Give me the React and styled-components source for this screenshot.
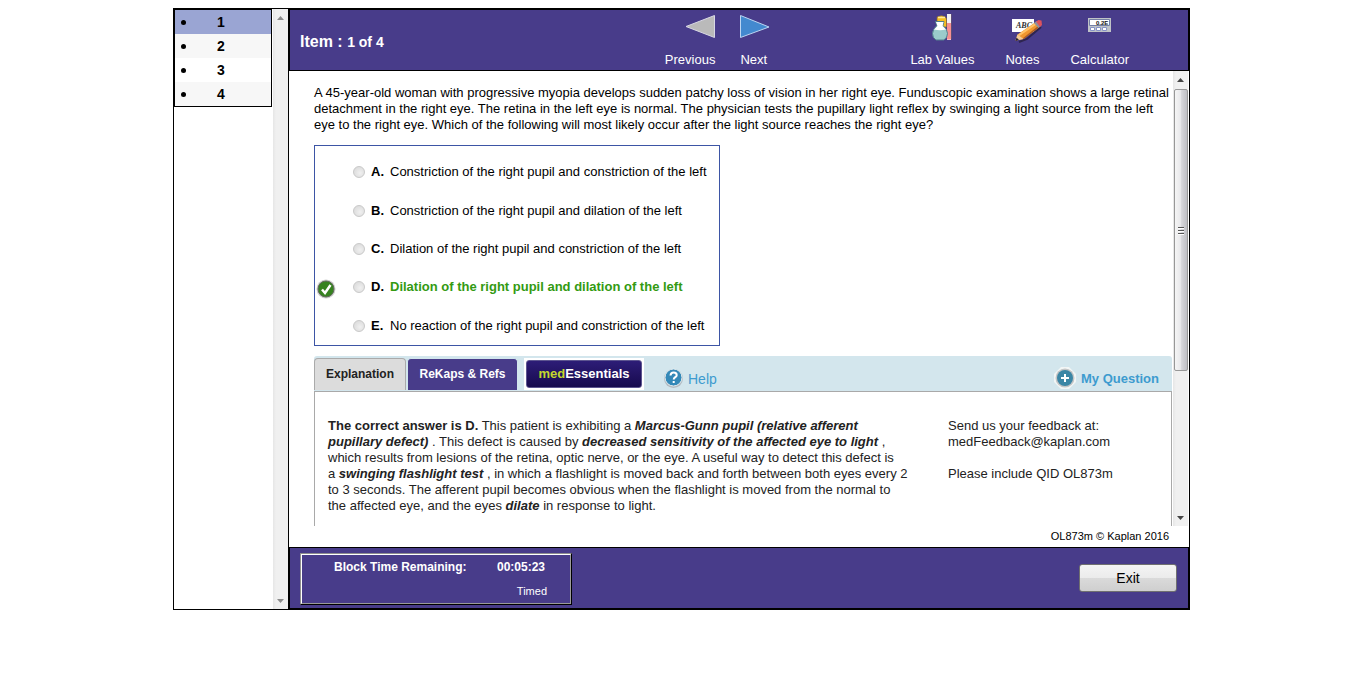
import React from "react";
import styled, { createGlobalStyle } from "styled-components";

const PURPLE = "#483c8a";

const GlobalStyle = createGlobalStyle`
  * { box-sizing: border-box; }
  body {
    margin: 0;
    background: #fff;
    color: #000;
    font: 13px/16px "Liberation Sans", Arial, sans-serif;
  }
  button, input { font: inherit; margin: 0; }
  p, ul, h1 { margin: 0; padding: 0; }
`;

const Page = styled.div`
  padding: 8px 3px 8px 0;
`;

const Shell = styled.div`
  display: grid;
  grid-template-columns: 114px minmax(0, 1fr);
  max-width: 1017px;
  min-height: 602px;
  margin: 0 auto;
  border: 1px solid #000;
`;

const Sidebar = styled.nav`
  display: flex;
  justify-content: space-between;
`;

const ItemList = styled.ul`
  align-self: flex-start;
  width: 98px;
  border: 1px solid #000;
  list-style: none;
`;

const ItemRow = styled.li`
  background: ${(p) => (p.$active ? "#9aa5d3" : p.$shade ? "#f7f7f7" : "#fff")};
`;

const ItemLink = styled.a`
  display: flex;
  align-items: center;
  height: 24px;
  padding-left: 6px;
  color: #000;
  font-size: 14px;
  font-weight: bold;
  text-decoration: none;

  &::before {
    content: "";
    width: 5px;
    height: 5px;
    margin-right: 31px;
    border-radius: 50%;
    background: #000;
  }
`;

const Track = styled.div`
  display: flex;
  flex-direction: column;
  align-items: center;
  flex: none;
  width: 15px;
  padding: ${(p) => (p.$idle ? "7px 0 6px" : "7px 0 6px")};
  justify-content: space-between;
  background: linear-gradient(90deg, #e6e6e6, #f0f0f0 3px);
`;

const Thumb = styled.div`
  display: flex;
  align-items: center;
  justify-content: center;
  width: 14px;
  height: 282px;
  margin: 7px 0 auto;
  border: 1px solid #979797;
  border-radius: 2px;
  background: linear-gradient(90deg, #f5f5f5, #e9e9eb 45%, #d6d6da 55%, #bfbfc4);
`;

const Main = styled.main`
  display: flex;
  flex-direction: column;
  border-left: 1px solid #000;
`;

const Header = styled.header`
  display: flex;
  align-items: flex-start;
  height: 62px;
  padding: 0 59px 0 10px;
  border: 1px solid #000;
  background: ${PURPLE};
  color: #fff;
`;

const Title = styled.h1`
  margin: 22px auto 0 0;
  font-size: 16px;
  line-height: 20px;
`;

const TitleCount = styled.span`
  font-size: 14px;
`;

const ButtonGroup = styled.div`
  display: flex;
  gap: ${(p) => p.$gap}px;
  margin-right: ${(p) => p.$after || 0}px;
`;

const ToolButton = styled.button`
  display: flex;
  flex-direction: column;
  align-items: ${(p) => p.$align || "center"};
  padding: 3px 0 0;
  border: 0;
  background: none;
  color: #fff;
  line-height: 16px;
  cursor: pointer;

  svg { display: block; height: 30px; margin-bottom: 9px; }
`;

const Content = styled.section`
  display: flex;
  flex-direction: column;
  flex: 1;
`;

const Scroller = styled.div`
  display: flex;
  flex: 1;
  padding: 0 1px 0 25px;
`;

const Body = styled.div`
  display: flex;
  flex-direction: column;
  flex: 1;
  min-width: 0;
  margin-right: 1px;
  padding-top: 14px;
`;

const Question = styled.p`
  margin-bottom: 12px;
`;

const Choices = styled.div`
  display: grid;
  grid-auto-rows: 1fr;
  width: 406px;
  height: 201px;
  padding-top: 7px;
  border: 1px solid #3d55a5;
`;

const Choice = styled.label`
  display: grid;
  grid-template-columns: 38px 18px 19px 1fr;
  align-items: center;
  white-space: nowrap;
`;

const Mark = styled.span`
  display: flex;
  padding: 3px 0 0 1px;
`;

const Radio = styled.input`
  appearance: none;
  width: 12px;
  height: 12px;
  border: 1px solid #c9c9c9;
  border-radius: 50%;
  background: radial-gradient(circle at 60% 60%, #f0f0f0, #d6d6d6);
`;

const ChoiceText = styled.span`
  color: ${(p) => (p.$correct ? "#339a12" : "#000")};
  font-weight: ${(p) => (p.$correct ? "bold" : "normal")};
`;

const TabBar = styled.div`
  display: flex;
  align-items: flex-start;
  height: 35px;
  margin-top: 10px;
  padding-top: 2px;
  border-radius: 3px 3px 0 0;
  background: #d3e6ed;
`;

const Tab = styled.button`
  width: ${(p) => p.$width}px;
  height: 32px;
  margin-right: 1px;
  padding: 0 0 2px;
  border: 1px solid ${(p) => (p.$active ? "#aaa" : "#d3e6ed")};
  border-bottom: 0;
  border-radius: 4px 4px 0 0;
  background: ${(p) => (p.$active ? "#dcdcdc" : PURPLE)};
  color: ${(p) => (p.$active ? "#222" : "#fff")};
  font-size: 12px;
  font-weight: bold;
`;

const BrandTab = styled.button`
  width: 120px;
  height: 32px;
  margin: 0 20px 0 5px;
  padding: 0;
  border: 2px solid #fff;
  background: #fff;
  color: #fff;
  font-weight: bold;
`;

const BrandFace = styled.span`
  display: block;
  height: 28px;
  border: 1px solid #5d5590;
  border-radius: 3px;
  background: linear-gradient(#2d1d77, #170a4e);
  line-height: 26px;
`;

const BrandAccent = styled.span`
  color: #c3d82e;
`;

const BarLink = styled.a`
  display: flex;
  align-items: center;
  gap: 5px;
  margin-top: 10px;
  margin-left: ${(p) => (p.$end ? "auto" : "0")};
  margin-right: ${(p) => (p.$end ? "13px" : "0")};
  color: #3d9bcf;
  font-size: ${(p) => (p.$end ? 13 : 14)}px;
  font-weight: ${(p) => (p.$end ? "bold" : "normal")};
  text-decoration: none;

  svg { display: block; margin: -3px 0; }
  span { padding-top: 3px; }
`;

const Panel = styled.div`
  display: flex;
  flex: 1;
  padding: 26px 0 0 13px;
  border: 1px solid #a9a9a9;
  border-bottom: 0;
  color: #222;
`;

const Explanation = styled.p`
  flex: none;
  width: 580px;
  margin-right: 40px;
`;

const Copyright = styled.p`
  height: 21px;
  padding: 2px 20px 0 0;
  font-size: 11px;
  text-align: right;
`;

const Footer = styled.footer`
  display: flex;
  align-items: flex-start;
  justify-content: space-between;
  height: 62px;
  padding: 5px 11px 0 10px;
  border: 1px solid #000;
  background: ${PURPLE};
  color: #fff;
`;

const TimerFrame = styled.div`
  width: 272px;
  height: 52px;
  border: 1px solid;
  border-color: #8f8f8f #000 #000 #8f8f8f;
`;

const Timer = styled.div`
  height: 50px;
  padding: 4px 23px 0 32px;
  border: 1px solid;
  border-color: #fff #9b9b9b #9b9b9b #fff;
`;

const TimerRow = styled.div`
  display: flex;
  justify-content: space-between;
  padding-right: 2px;
  font-size: 12px;
  font-weight: bold;
`;

const TimerMode = styled.div`
  margin-top: 8px;
  font-size: 11px;
  text-align: right;
`;

const ExitButton = styled.button`
  width: 98px;
  height: 28px;
  margin-top: 11px;
  border: 1px solid #707070;
  border-radius: 3px;
  background: linear-gradient(#f4f4f4, #ebebeb 50%, #dadada 50%, #cfcfcf);
  color: #000;
  font-size: 14px;
`;

const ArrowUp = ({ color = "#444" }) => (
  <svg width="7" height="4" aria-hidden="true"><path d="M0 4 3.5 0 7 4Z" fill={color} /></svg>
);
const ArrowDown = ({ color = "#444" }) => (
  <svg width="7" height="4" aria-hidden="true"><path d="M0 0 3.5 4 7 0Z" fill={color} /></svg>
);
const Grip = () => (
  <svg width="8" height="9" aria-hidden="true">
    <path d="M1 1.5h6M1 4.5h6M1 7.5h6" stroke="#555" />
    <path d="M1 2.5h6M1 5.5h6M1 8.5h6" stroke="#fff" />
  </svg>
);

const PreviousIcon = () => (
  <svg width="30" height="30"><path d="M29.5 2.5v22L1 13.5Z" fill="#bababa" stroke="#d8d8e4" /></svg>
);
const NextIcon = () => (
  <svg width="30" height="30"><path d="M.5 2.5v22L29 14Z" fill="#4389cf" stroke="#bcd5f2" /></svg>
);

const LabIcon = () => (
  <svg width="22" height="30">
    <path d="M16 1h4v26h-4z" fill="#f4f1f4" />
    <path d="M16 10h4v16.500h-4z" fill="#f58f91" />
    <path d="M20.500 1v25" stroke="#5d4d77" />
    <path d="M6 4q4.500-2.500 8.500 0l1 2V14H6z" fill="#f5bd22" stroke="#80683d" strokeWidth=".7" />
    <path d="M7 4.500h7" stroke="#ffeaa2" strokeWidth="1.500" />
    <path d="M4.500 8.500h8.500l-1 4q4.500 4 4.500 8 0 4-3.500 6.500H5Q1.500 25 1.500 20.500q0-4 4.500-8z" fill="#9acbcb" stroke="#527f8e" />
    <path d="M5 9h7.500l-1 4 3.500 3.500q-6 1.500-12 0L6.500 13z" fill="#fff" />
  </svg>
);

const NotesIcon = () => (
  <svg width="42" height="30">
    <path d="M11 6h22v13H11z" fill="#fff" />
    <text x="15" y="15" fontFamily="Liberation Serif, serif" fontSize="8" fontStyle="italic" fontWeight="bold" fill="#333">ABC</text>
    <path d="m18 29 8-3 14-12" fill="none" stroke="#2e254f" strokeWidth="2" />
    <path d="m14.500 27.500 2-6L34 9.500l4 5L22.500 26z" fill="#ef962f" />
    <path d="m17 21.500 17-11.500 1.500 1.500L18.500 23z" fill="#ffc367" />
    <path d="m21.500 25.500 15-12 1.500 1L23 26z" fill="#ac5e23" />
    <path d="m14.500 27.500 2-6 6 4.500z" fill="#f1c997" />
    <path d="m14.500 28 1-3.500 2.500 2.500z" fill="#292330" />
    <path d="m33 10 2.500-2 4 5.500-2 1.500z" fill="#8c929e" />
    <path d="m35 8.500 2.500-1.500 3 .5.500 4.500-2 2z" fill="#dc535e" />
  </svg>
);

const CalculatorIcon = () => (
  <svg width="23" height="30">
    <path d="M0 5h23v14H0z" fill="#bfc3c7" />
    <path d="M1.500 6.500h20v6h-20z" fill="#fff" stroke="#747ea4" />
    <text x="8" y="12" fontFamily="Liberation Sans, sans-serif" fontSize="6" fontWeight="bold" fill="#111">0.2E</text>
    <path d="M2.500 14.500h4v3h-4zM8.500 14.500h4v3h-4zM14.500 14.500h4v3h-4z" fill="#fff" stroke="#8793c7" />
  </svg>
);

const CheckIcon = () => (
  <svg width="20" height="20" role="img" aria-label="Correct answer">
    <circle cx="10" cy="10" r="9.500" fill="#cfcfcf" />
    <circle cx="10" cy="10" r="8" fill="#36821f" stroke="#626b5d" />
    <path d="m6 10.500 3 3.500 5.500-8" fill="none" stroke="#fff" strokeWidth="2.500" />
  </svg>
);

const HelpIcon = () => (
  <svg width="19" height="20" aria-hidden="true">
    <circle cx="9.500" cy="10.500" r="9.500" fill="#b4bcc2" />
    <circle cx="9.500" cy="9.500" r="8.500" fill="#3489b8" stroke="#e4edf0" />
    <path d="M6.500 7.500q.2-3 3.200-3t3 2.700c0 2-3 2-3 4.300M9.700 13v2" fill="none" stroke="#fff" strokeWidth="2" />
  </svg>
);

const PlusIcon = () => (
  <svg width="22" height="22" aria-hidden="true">
    <path d="M7 0h8l7 7v8l-7 7H7l-7-7V7z" fill="#f2f6f6" />
    <circle cx="11" cy="11" r="9.500" fill="#c3c5c6" />
    <circle cx="11" cy="11" r="8" fill="#3b86a5" />
    <path d="M11 7v8M7 11h8" stroke="#fff" strokeWidth="2" />
  </svg>
);

const choices = [
  ["A.", "Constriction of the right pupil and constriction of the left"],
  ["B.", "Constriction of the right pupil and dilation of the left"],
  ["C.", "Dilation of the right pupil and constriction of the left"],
  ["D.", "Dilation of the right pupil and dilation of the left", true],
  ["E.", "No reaction of the right pupil and constriction of the left"],
];

export default function App() {
  return (
    <Page>
      <GlobalStyle />
      <Shell>
        <Sidebar aria-label="Items">
          <ItemList>
            {[1, 2, 3, 4].map((n) => (
              <ItemRow key={n} $active={n === 1} $shade={n % 2 === 0}>
                <ItemLink href={`#item-${n}`}>{n}</ItemLink>
              </ItemRow>
            ))}
          </ItemList>
          <Track $idle><ArrowUp color="#8c8c8c" /><ArrowDown color="#8c8c8c" /></Track>
        </Sidebar>
        <Main>
          <Header>
            <Title>Item : <TitleCount>1 of 4</TitleCount></Title>
            <ButtonGroup $gap={25} $after={140}>
              <ToolButton $align="flex-end"><PreviousIcon />Previous</ToolButton>
              <ToolButton $align="flex-start"><NextIcon />Next</ToolButton>
            </ButtonGroup>
            <ButtonGroup $gap={27}>
              <ToolButton><LabIcon />Lab Values</ToolButton>
              <ToolButton><NotesIcon />Notes</ToolButton>
              <ToolButton><CalculatorIcon />Calculator</ToolButton>
            </ButtonGroup>
          </Header>
          <Content>
            <Scroller>
              <Body>
                <Question>
                  A 45-year-old woman with progressive myopia develops sudden patchy loss of vision in her right eye. Funduscopic examination shows a large retinal<br />
                  detachment in the right eye. The retina in the left eye is normal. The physician tests the pupillary light reflex by swinging a light source from the left<br />
                  eye to the right eye. Which of the following will most likely occur after the light source reaches the right eye?
                </Question>
                <Choices role="radiogroup" aria-label="Answer choices">
                  {choices.map(([letter, text, correct]) => (
                    <Choice key={letter}>
                      <Mark>{correct && <CheckIcon />}</Mark>
                      <Radio type="radio" name="answer" />
                      <b>{letter}</b>
                      <ChoiceText $correct={correct}>{text}</ChoiceText>
                    </Choice>
                  ))}
                </Choices>
                <TabBar>
                  <Tab $active $width={92}>Explanation</Tab>
                  <Tab $width={111}>ReKaps &amp; Refs</Tab>
                  <BrandTab><BrandFace><BrandAccent>med</BrandAccent>Essentials</BrandFace></BrandTab>
                  <BarLink href="#help"><HelpIcon /><span>Help</span></BarLink>
                  <BarLink href="#my-question" $end><PlusIcon /><span>My Question</span></BarLink>
                </TabBar>
                <Panel>
                  <Explanation>
                    <b>The correct answer is D.</b> This patient is exhibiting a <b><i>Marcus-Gunn pupil (relative afferent<br />
                    pupillary defect)</i></b> . This defect is caused by <b><i>decreased sensitivity of the affected eye to light</i></b> ,<br />
                    which results from lesions of the retina, optic nerve, or the eye. A useful way to detect this defect is<br />
                    a <b><i>swinging flashlight test</i></b> , in which a flashlight is moved back and forth between both eyes every 2<br />
                    to 3 seconds. The afferent pupil becomes obvious when the flashlight is moved from the normal to<br />
                    the affected eye, and the eyes <b><i>dilate</i></b> in response to light.
                  </Explanation>
                  <p>
                    Send us your feedback at:<br />
                    medFeedback@kaplan.com<br />
                    <br />
                    Please include QID OL873m
                  </p>
                </Panel>
              </Body>
              <Track><ArrowUp /><Thumb><Grip /></Thumb><ArrowDown /></Track>
            </Scroller>
            <Copyright>OL873m © Kaplan 2016</Copyright>
          </Content>
          <Footer>
            <TimerFrame>
              <Timer>
                <TimerRow><span>Block Time Remaining:</span><span>00:05:23</span></TimerRow>
                <TimerMode>Timed</TimerMode>
              </Timer>
            </TimerFrame>
            <ExitButton>Exit</ExitButton>
          </Footer>
        </Main>
      </Shell>
    </Page>
  );
}
